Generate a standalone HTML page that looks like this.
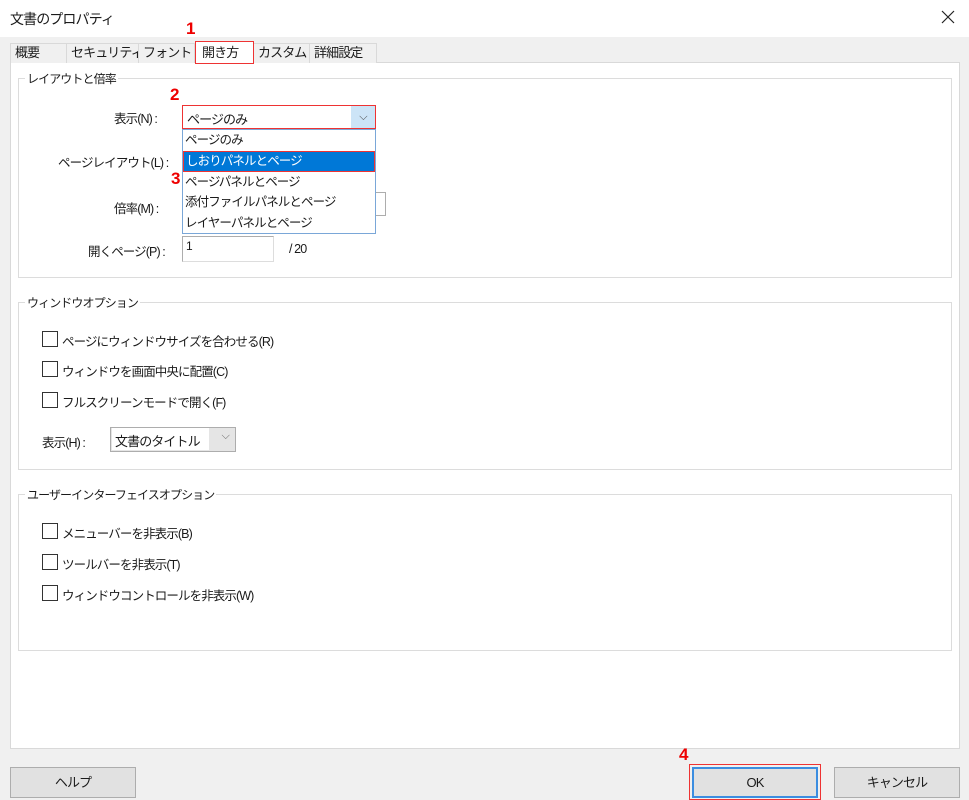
<!DOCTYPE html>
<html><head><meta charset="utf-8"><style>
*{box-sizing:border-box;margin:0;padding:0}
body{width:969px;height:800px;background:#f0f0f0;font-family:"Liberation Sans","Noto Sans CJK JP",sans-serif;font-size:12.5px;letter-spacing:-0.9px;color:#1a1a1a;position:relative;overflow:hidden}
.a{position:absolute;white-space:nowrap}
.tab{position:absolute;top:43px;height:20px;border:1px solid #d9d9d9;border-bottom:none;background:#f0f0f0;font-size:13px;line-height:18px;padding-left:4px;white-space:nowrap;overflow:hidden}
.grp{position:absolute;left:18px;width:934px;border:1px solid #dcdcdc}
.leg{position:absolute;top:-9px;left:6px;background:#fff;padding:0 2px;font-size:12px;white-space:nowrap}
.cb{position:absolute;width:16px;height:16px;border:1px solid #333;background:#fff}
.red{color:#e00;font-weight:bold;font-size:17px;letter-spacing:0}
.btn{position:absolute;top:767px;height:31px;border:1px solid #adadad;background:#e1e1e1;text-align:center;line-height:29px;font-size:13px}
</style></head><body>
<div class="a" style="left:0;top:0;width:969px;height:37px;background:#fff"></div>
<div class="a" style="left:10px;top:9px;font-size:14px">文書のプロパティ</div>
<svg class="a" style="left:941px;top:10px" width="14" height="14"><path d="M1 1L13 13M13 1L1 13" stroke="#222" stroke-width="1.2"/></svg>
<div class="a" style="left:10px;top:62px;width:950px;height:687px;background:#fff;border:1px solid #d9d9d9"></div>
<div class="tab" style="left:10px;width:57px">概要</div>
<div class="tab" style="left:66px;width:73px">セキュリティ</div>
<div class="tab" style="left:138px;width:57px">フォント</div>
<div class="tab" style="left:253px;width:57px">カスタム</div>
<div class="tab" style="left:309px;width:68px">詳細設定</div>
<div class="tab" style="left:195px;top:41px;width:59px;height:23px;background:#fff;border:1px solid #e33;line-height:22px;z-index:2;padding-left:6px">開き方</div>
<div class="a red" style="left:186px;top:19px">1</div>
<div class="grp" style="top:78px;height:200px"><div class="leg">レイアウトと倍率</div></div>
<div class="a" style="left:114px;top:108px">表示(N) :</div>
<div class="a" style="left:58px;top:152px">ページレイアウト(L) :</div>
<div class="a" style="left:114px;top:198px">倍率(M) :</div>
<div class="a" style="left:88px;top:241px">開くページ(P) :</div>
<div class="a" style="left:365px;top:192px;width:21px;height:24px;border:1px solid #adadad;background:#fff"></div>
<div class="a" style="left:182px;top:236px;width:92px;height:26px;border:1px solid #adadad;border-bottom-color:#ddd;border-right-color:#ddd;background:#fff;padding:2px 3px;font-size:12px">1</div>
<div class="a" style="left:289px;top:242px">/ 20</div>
<div class="a red" style="left:170px;top:85px">2</div>
<div class="a" style="left:182px;top:105px;width:194px;height:24px;border:1px solid #e33;background:#fff;padding:3px 4px;font-size:13px">ページのみ<div style="position:absolute;right:0;top:0;width:24px;height:22px;background:#cce4f7;text-align:center;color:#444;font-size:11px;line-height:22px">⌵</div></div>
<div class="a" style="left:182px;top:129px;width:194px;height:105px;border:1px solid #7aa7d8;background:#fff;font-size:12.5px;line-height:20.6px">
<div style="padding-left:2px">ページのみ</div>
<div style="background:#0078d7;color:#fff;border:1.5px solid #e33;padding-left:2px;line-height:18px;height:21px">しおりパネルとページ</div>
<div style="padding-left:2px">ページパネルとページ</div>
<div style="padding-left:2px">添付ファイルパネルとページ</div>
<div style="padding-left:2px">レイヤーパネルとページ</div>
</div>
<div class="a red" style="left:171px;top:169px">3</div>
<div class="grp" style="top:302px;height:168px"><div class="leg">ウィンドウオプション</div></div>
<div class="cb" style="left:42px;top:331px"></div><div class="a" style="left:62px;top:331px">ページにウィンドウサイズを合わせる(R)</div>
<div class="cb" style="left:42px;top:361px"></div><div class="a" style="left:62px;top:361px">ウィンドウを画面中央に配置(C)</div>
<div class="cb" style="left:42px;top:392px"></div><div class="a" style="left:62px;top:392px">フルスクリーンモードで開く(F)</div>
<div class="a" style="left:42px;top:432px">表示(H) :</div>
<div class="a" style="left:110px;top:427px;width:126px;height:25px;border:1px solid #adadad;background:#e5e5e5;font-size:13px;padding:2px 4px"><span style="background:#fff;display:inline-block;width:97px;margin:-2px 0 0 -3px;padding:3px 3px;height:22px">文書のタイトル</span><span style="position:absolute;right:6px;top:2px;color:#666;font-size:11px">⌵</span></div>
<div class="grp" style="top:494px;height:157px"><div class="leg">ユーザーインターフェイスオプション</div></div>
<div class="cb" style="left:42px;top:523px"></div><div class="a" style="left:62px;top:523px">メニューバーを非表示(B)</div>
<div class="cb" style="left:42px;top:554px"></div><div class="a" style="left:62px;top:554px">ツールバーを非表示(T)</div>
<div class="cb" style="left:42px;top:585px"></div><div class="a" style="left:62px;top:585px">ウィンドウコントロールを非表示(W)</div>
<div class="btn" style="left:10px;width:126px">ヘルプ</div>
<div class="a" style="left:689px;top:764px;width:132px;height:36px;border:1px solid #e33"></div>
<div class="btn" style="left:692px;width:126px;border:2px solid #3b8de0;line-height:27px">OK</div>
<div class="btn" style="left:834px;width:126px">キャンセル</div>
<div class="a red" style="left:679px;top:745px">4</div>
</body></html>
